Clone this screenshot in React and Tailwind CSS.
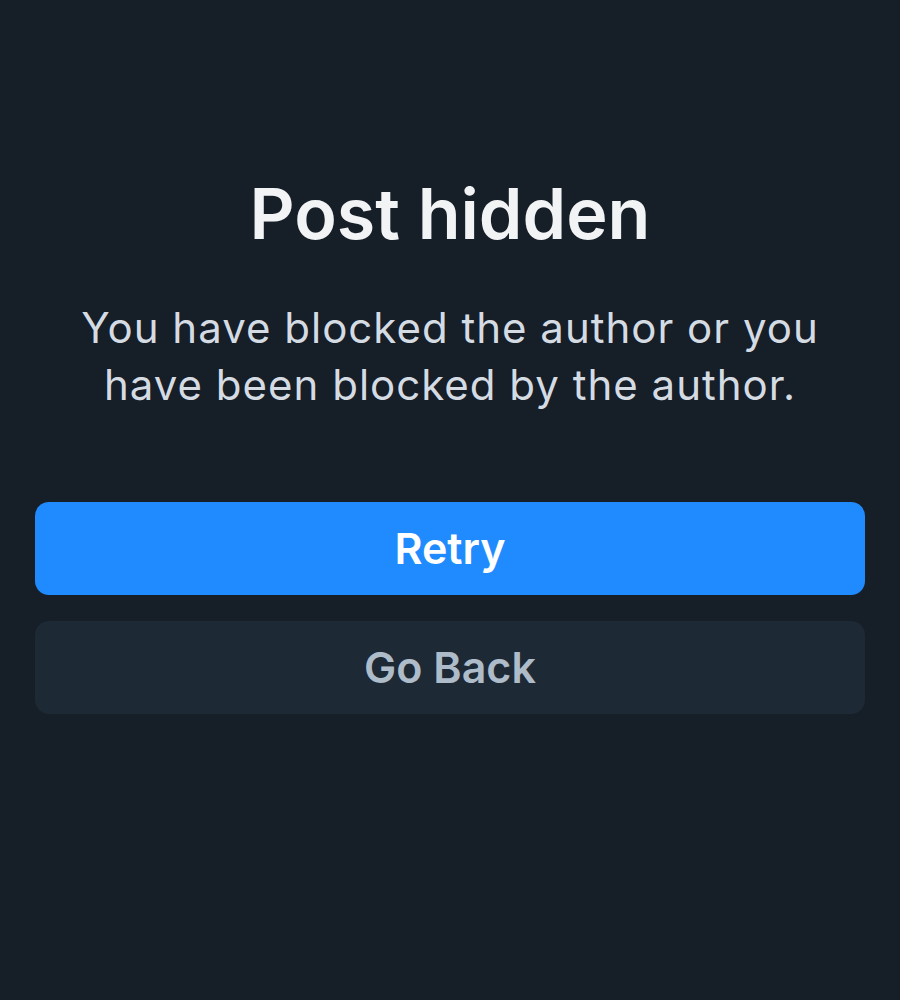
import React from "react";

const PostHidden = () => {
    return (
        <div className="min-h-screen w-full bg-[#161e27] font-['Inter','Noto_Sans',sans-serif] flex flex-col px-[35px] pt-[172px]">
            {/* Header */}
            <h1 className="text-center text-[70px] leading-[84px] font-semibold text-[#f1f3f5]">
                Post hidden
            </h1>

            {/* Mensaje */}
            <p className="mt-[43px] text-center text-[42px] leading-[57px] text-[#d4dbe2] tracking-[1px] px-[10px]">
                You have blocked the author or you have been blocked by the author.
            </p>

            {/* Botones */}
            <div className="mt-[89px] flex flex-col gap-[26px]">
                <button className="w-full h-[93px] rounded-[14px] bg-[#208bfe] text-white text-[43px] font-semibold">
                    Retry
                </button>
                <button className="w-full h-[93px] rounded-[14px] bg-[#1e2936] text-[#aebbc9] text-[43px] font-semibold">
                    Go Back
                </button>
            </div>
        </div>
    );
};

export default function App() {
    return <PostHidden />;
}
